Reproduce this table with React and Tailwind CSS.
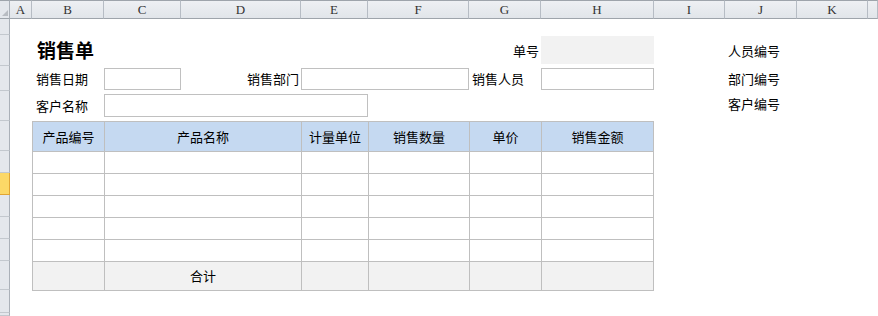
const columns = ['A', 'B', 'C', 'D', 'E', 'F', 'G', 'H', 'I', 'J', 'K', ''];
// heights of sheet rows below the column header strip
const rowHeights = [16, 31, 25, 30, 30, 22, 22, 22, 22, 22, 29, 23, 3];
const tableHead = ['产品编号', '产品名称', '计量单位', '销售数量', '单价', '销售金额'];

const cjk = { fontFamily: '"Noto Sans CJK SC", "Noto Sans", sans-serif' };

const Label = ({ className = '', children }) => (
  <div className={`flex items-center text-[13px] text-black ${className}`}>{children}</div>
);

const Box = ({ className = '', gray }) => (
  <div className={`${className} ${gray ? 'bg-[#f2f2f2]' : 'border border-[#c0c0c0] bg-white'}`} />
);

export default function App() {
  return (
    <div
      className="grid h-[316px] w-[878px] overflow-hidden bg-white grid-cols-[10px_22px_72px_77px_120px_67px_101px_72px_113px_71px_72px_71px_1fr] grid-rows-[19px_16px_31px_25px_30px_30px_22px_22px_22px_22px_22px_29px_23px_1fr]"
      style={cjk}
    >
      {/* corner + column letters */}
      <div className="col-start-1 row-start-1 relative border-t border-r border-b border-t-[#9ea4ab] border-r-[#aab0b8] border-b-[#9ea4ab] bg-[#e4e7ec]">
        <div className="absolute bottom-[2px] right-[1px] h-0 w-0 border-l-[6px] border-t-[6px] border-l-transparent border-t-transparent border-b-[0px] border-r-[6px] border-r-[#b8bcc2]" />
      </div>
      {columns.map((c, i) => (
        <div
          key={i}
          className="row-start-1 flex items-center justify-center border-t border-b border-r border-t-[#9ea4ab] border-b-[#9ea4ab] border-r-[#b6bcc4] bg-gradient-to-b from-[#eef0f3] to-[#e1e5ea] text-[13px] text-[#333]"
          style={{ gridColumnStart: i + 2, fontFamily: '"Liberation Serif", serif' }}
        >
          {c}
        </div>
      ))}

      {/* row header strip */}
      {rowHeights.map((_, i) => (
        <div
          key={i}
          className={`col-start-1 border-r border-b ${
            i === 6
              ? 'bg-[#fcd867] border-[#e1a534]'
              : 'bg-[#e4e7ec] border-r-[#aab0b8] border-b-[#c3c8ce]'
          }`}
          style={{ gridRowStart: i + 2 }}
        />
      ))}

      {/* title row */}
      <div className="col-start-3 col-end-5 row-start-3 flex items-center pl-[5px] text-[19px] font-bold text-black">
        销售单
      </div>
      <Label className="col-start-8 row-start-3 justify-end pr-[2px]">单号</Label>
      <Box gray className="col-start-9 row-start-3 my-[1px] mb-[2px]" />
      <Label className="col-start-11 row-start-3 pl-[3px]">人员编号</Label>

      {/* date / department / salesperson */}
      <Label className="col-start-3 row-start-4 pl-[4px]">销售日期</Label>
      <Box className="col-start-4 row-start-4 mt-[2px] mb-[1px]" />
      <Label className="col-start-5 row-start-4 justify-end pr-[2px]">销售部门</Label>
      <Box className="col-start-6 col-end-8 row-start-4 mt-[2px] mb-[1px]" />
      <Label className="col-start-8 row-start-4 pl-[3px]">销售人员</Label>
      <Box className="col-start-9 row-start-4 mt-[2px] mb-[1px]" />
      <Label className="col-start-11 row-start-4 pl-[3px]">部门编号</Label>

      {/* customer */}
      <Label className="col-start-3 row-start-5 pl-[4px] pb-[1px]">客户名称</Label>
      <Box className="col-start-4 col-end-7 row-start-5 mt-[3px] mb-[4px]" />
      <Label className="col-start-11 row-start-5 pl-[3px] pb-[5px]">客户编号</Label>

      {/* line items */}
      <div className="col-start-3 col-end-10 row-start-6 row-end-13 self-start grid grid-cols-[72px_197px_67px_101px_72px_112px] grid-rows-[30px_22px_22px_22px_22px_22px_29px] w-max border-l border-t border-[#bfbfbf]">
        {tableHead.map((h) => (
          <div
            key={h}
            className="flex items-center justify-center border-r border-b border-[#bfbfbf] bg-[#c5d9f1] text-[13px] text-black"
          >
            {h}
          </div>
        ))}
        {Array.from({ length: 5 }).flatMap((_, r) =>
          tableHead.map((h) => <div key={`${r}-${h}`} className="border-r border-b border-[#bfbfbf] bg-white" />)
        )}
        {tableHead.map((h, i) => (
          <div
            key={`sum-${h}`}
            className="flex items-center justify-center border-r border-b border-[#bfbfbf] bg-[#f2f2f2] text-[13px] text-black"
          >
            {i === 1 ? '合计' : ''}
          </div>
        ))}
      </div>
    </div>
  );
}
